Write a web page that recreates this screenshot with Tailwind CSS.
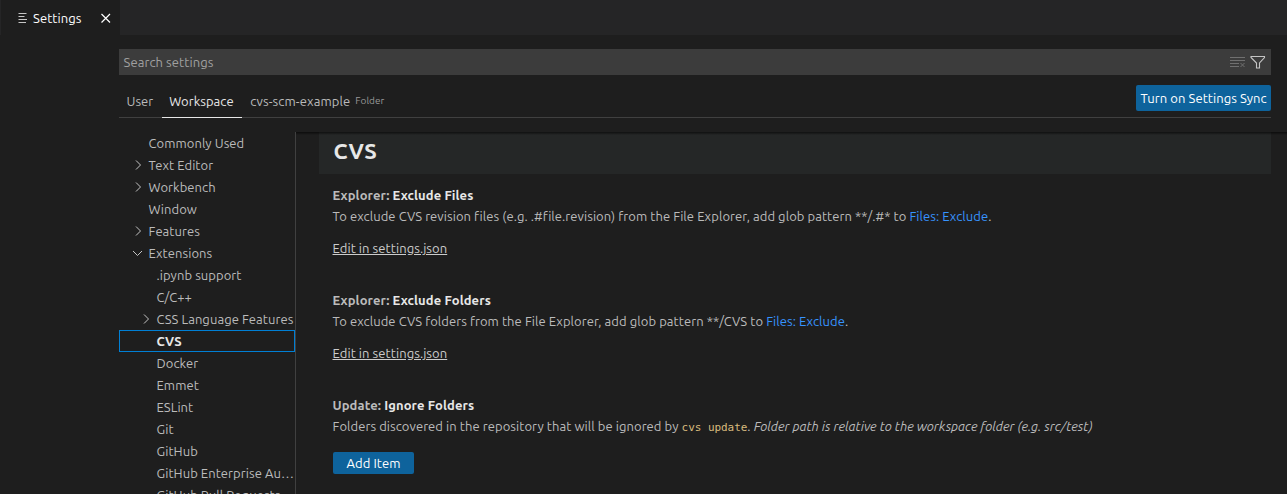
<!DOCTYPE html>
<html lang="en">
<head>
<meta charset="utf-8">
<title>Settings</title>
<script src="https://cdn.jsdelivr.net/npm/@tailwindcss/browser@4"></script>
</head>
<body class="h-[494px] w-[1287px] overflow-hidden bg-[#1e1e1e] font-[Ubuntu,'Open_Sans',sans-serif] text-[13px] leading-[22px] text-[#bbbbbb]">
<div class="flex h-[494px] flex-col overflow-hidden">
  <header class="flex h-[35px] shrink-0 bg-[#252526]">
    <div class="flex w-[120px] items-center border-l border-[#252526] bg-[#1e1e1e] pl-4 text-white">
      <svg class="mt-px size-3 shrink-0" viewBox="0 0 12 12" stroke="#c5c5c5" fill="none"><path d="M1.500 1.500h8M1.500 4.500h6M1.500 7.500h8.500M1.500 10.500h7.500"/></svg>
      <span class="ml-[4px] w-[67px] tracking-[0.08px]">Settings</span>
      <svg class="size-3 shrink-0" viewBox="0 0 12 12" stroke="#fff" stroke-width="1.2" fill="none"><path d="M1.500 2l8.500 8.500M10 2l-8.500 8.500"/></svg>
    </div>
  </header>
  <main class="flex min-h-0 flex-1 flex-col pl-[119px]">
    <div class="mt-[14px] flex h-[26px] w-[1152px] shrink-0 items-center bg-[#3c3c3c] pl-[4.500px] pr-[5px] text-[#a0a0a0]">
      <span class="flex-1 tracking-[0.08px]">Search settings</span>
      <svg class="h-3 w-4" viewBox="0 0 16 12" stroke="#707070" fill="none"><path d="M0 1.500h15M0 4.500h15M0 7.500h9M0 10.500h9M10.500 7l4 4M14.500 7l-4 4"/></svg>
      <svg class="ml-[4px] size-4" viewBox="0 0 16 16" stroke="#c5c5c5" stroke-width="1.1" fill="none"><path d="M1 2.500h13.500v1l-5 5.500v5h-3V9l-5.500-5.500z"/></svg>
    </div>
    <nav class="mt-[10px] flex h-[33px] w-[1152px] shrink-0 border-b border-[#404040]">
      <span class="pl-[7.500px] pr-[8.500px] pt-[5px]">User</span>
      <span class="-mb-px w-[80px] border-b border-[#e7e7e7] pl-[7.500px] pt-[5px] tracking-[0.05px] text-[#e7e7e7]">Workspace</span>
      <span class="pl-[8.500px] pt-[5px] tracking-[0.12px]">cvs-scm-example</span>
      <span class="pl-[5px] pt-[5px] text-[10px] text-[#999]">Folder</span>
      <button class="ml-auto h-[26px] w-[135px] rounded-[2px] bg-[#0e639c] tracking-[0.06px] text-white">Turn on Settings Sync</button>
    </nav>
    <div class="mt-[14px] flex min-h-0 flex-1">
      <aside class="flex w-[177px] shrink-0 flex-col overflow-hidden border-r border-[#404040] tracking-[0.06px] whitespace-nowrap">
        <div class="h-[22px] shrink-0 pl-[29.500px]">Commonly Used</div>
        <div class="flex h-[22px] shrink-0 items-center pl-[13px]"><svg class="mr-[4.500px] size-3" viewBox="0 0 12 12" stroke="#c5c5c5" fill="none"><path d="M4 1.500L8.500 6L4 10.500"/></svg>Text Editor</div>
        <div class="flex h-[22px] shrink-0 items-center pl-[13px]"><svg class="mr-[4.500px] size-3" viewBox="0 0 12 12" stroke="#c5c5c5" fill="none"><path d="M4 1.500L8.500 6L4 10.500"/></svg>Workbench</div>
        <div class="h-[22px] shrink-0 pl-[29.500px]">Window</div>
        <div class="flex h-[22px] shrink-0 items-center pl-[13px]"><svg class="mr-[4.500px] size-3" viewBox="0 0 12 12" stroke="#c5c5c5" fill="none"><path d="M4 1.500L8.500 6L4 10.500"/></svg>Features</div>
        <div class="flex h-[22px] shrink-0 items-center pl-[13px]"><svg class="mr-[4.500px] size-3" viewBox="0 0 12 12" stroke="#c5c5c5" fill="none"><path d="M1 4L5.500 8.500L10 4"/></svg>Extensions</div>
        <div class="h-[22px] shrink-0 pl-[37.500px]">.ipynb support</div>
        <div class="h-[22px] shrink-0 pl-[37.500px]">C/C++</div>
        <div class="flex h-[22px] shrink-0 items-center pl-[21px]"><svg class="mr-[4.500px] size-3 shrink-0" viewBox="0 0 12 12" stroke="#c5c5c5" fill="none"><path d="M4 1.500L8.500 6L4 10.500"/></svg>CSS Language Features</div>
        <div class="h-[22px] shrink-0 border border-[#007fd4] pl-[36.500px] leading-5 font-bold text-[#e7e7e7]">CVS</div>
        <div class="h-[22px] shrink-0 pl-[37.500px]">Docker</div>
        <div class="h-[22px] shrink-0 pl-[37.500px]">Emmet</div>
        <div class="h-[22px] shrink-0 pl-[37.500px]">ESLint</div>
        <div class="h-[22px] shrink-0 pl-[37.500px]">Git</div>
        <div class="h-[22px] shrink-0 pl-[37.500px]">GitHub</div>
        <div class="h-[22px] shrink-0 pl-[37.500px]">GitHub Enterprise Au…</div>
        <div class="h-[22px] shrink-0 pl-[37.500px]">GitHub Pull Requests</div>
      </aside>
      <section class="relative flex-1 pl-[23px]">
        <div class="absolute inset-x-0 top-0 h-[3px] bg-linear-to-b from-black/60 to-transparent"></div>
        <h1 class="h-[42px] w-[952px] bg-[#252727] pl-[14.500px] text-[22px] leading-[38px] font-bold tracking-[0.4px] text-[#e7e7e7]">CVS</h1>
        <div class="pl-[13.500px] tracking-[0.066px]">
          <article class="h-[105px] pt-[10px]">
            <h2 class="font-bold tracking-[0.1px]">Explorer: <span class="text-[#e7e7e7]">Exclude Files</span></h2>
            <p class="-mt-px">To exclude CVS revision files (e.g. .#file.revision) from the File Explorer, add glob pattern **/.#* to <a class="text-[#3794ff]">Files: Exclude</a>.</p>
            <a class="mt-[10px] block text-[#cccccc] underline">Edit in settings.json</a>
          </article>
          <article class="h-[105px] pt-[10px]">
            <h2 class="font-bold tracking-[0.1px]">Explorer: <span class="text-[#e7e7e7]">Exclude Folders</span></h2>
            <p class="-mt-px">To exclude CVS folders from the File Explorer, add glob pattern **/CVS to <a class="text-[#3794ff]">Files: Exclude</a>.</p>
            <a class="mt-[10px] block text-[#cccccc] underline">Edit in settings.json</a>
          </article>
          <article class="pt-[10px]">
            <h2 class="font-bold tracking-[0.1px]">Update: <span class="text-[#e7e7e7]">Ignore Folders</span></h2>
            <p class="-mt-px">Folders discovered in the repository that will be ignored by <code class="font-['Droid_Sans_Mono','DejaVu_Sans_Mono',monospace] text-[11px] tracking-[-0.05px] text-[#d7ba7d]">cvs update</code>. <em class="tracking-normal">Folder path is relative to the workspace folder (e.g. src/test)</em></p>
            <button class="ml-[0.500px] mt-[13px] block h-[22px] w-[81px] rounded-[2px] bg-[#0e639c] text-white">Add Item</button>
          </article>
        </div>
      </section>
    </div>
  </main>
</div>
</body>
</html>
